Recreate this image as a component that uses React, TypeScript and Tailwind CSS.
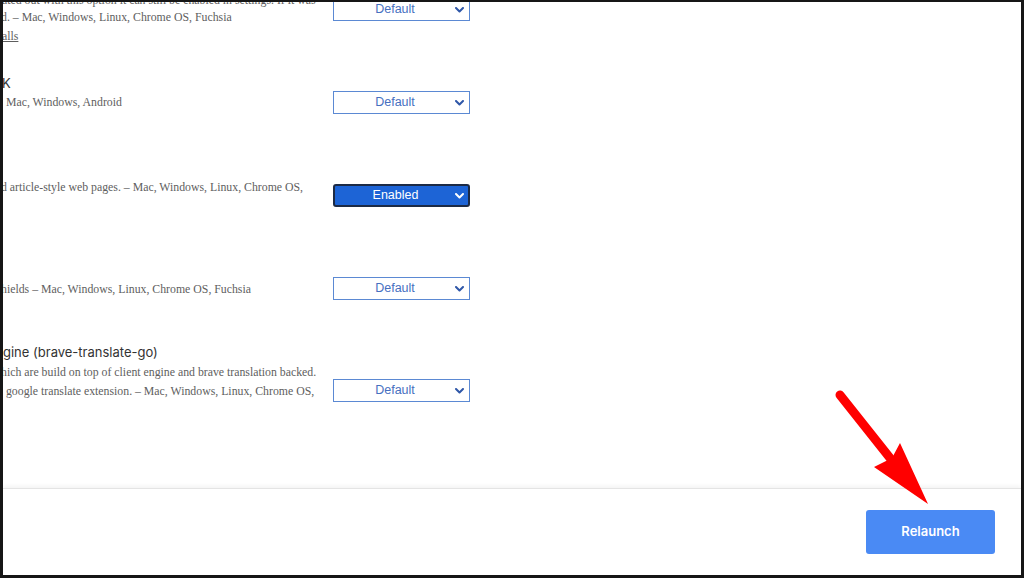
import React from "react";

const serif = { fontFamily: '"Liberation Serif", "Times New Roman", serif' };
const sans = { fontFamily: '"Liberation Sans", Arial, sans-serif' };
const head = { fontFamily: 'Inter, "Noto Sans", sans-serif' };

function Chevron({ color }: { color: string }) {
  return (
    <svg width="9" height="6" viewBox="0 0 9 6" className="shrink-0">
      <path d="M1 1 L4.5 4.5 L8 1" fill="none" stroke={color} strokeWidth="2" strokeLinecap="round" strokeLinejoin="round" />
    </svg>
  );
}

function Select({ value, enabled = false, className = "" }: { value: string; enabled?: boolean; className?: string }) {
  if (enabled) {
    return (
      <div
        className={`flex h-[23px] w-[137px] items-center rounded-[3px] border-2 border-[#1c2a45] bg-[#1d64d6] pr-[4px] text-[12.5px] text-white ${className}`}
        style={sans}
      >
        <span className="flex-1 text-center pl-[1px]">{value}</span>
        <Chevron color="#ffffff" />
      </div>
    );
  }
  return (
    <div
      className={`flex h-[23px] w-[137px] items-center border border-[#5b89d3] bg-white pr-[5px] text-[12.5px] text-[#4670bf] ${className}`}
      style={sans}
    >
      <span className="flex-1 text-center pl-[1px]">{value}</span>
      <Chevron color="#2f57a8" />
    </div>
  );
}

export default function App() {
  return (
    <div className="relative flex h-[578px] w-[1024px] flex-col overflow-hidden border-b-[3px] border-l-[3px] border-r-[3px] border-t-[2px] border-[#161616] bg-white">
      <div className="flex flex-1 flex-col overflow-hidden">
        {/* Row A */}
        <div className="-mt-[10px] flex items-start">
          <div className="w-[330px] text-[11.8px] text-[#5e5e5e] whitespace-nowrap" style={serif}>
            <div className="-ml-[1px] leading-[16px]">ated out with this option it can still be enabled in settings. If it was</div>
            <div className="-ml-[2px] leading-[19px]">d. – Mac, Windows, Linux, Chrome OS, Fuchsia</div>
            <div className="-ml-[1px] leading-[19px]"><span className="underline">alls</span></div>
          </div>
          <Select value="Default" className="mt-[6px]" />
        </div>

        {/* Row B */}
        <div className="mt-[28px] flex items-start">
          <div className="w-[330px] whitespace-nowrap">
            <div className="text-[13px] leading-[18px] text-[#333333] -ml-[1px]" style={head}>K</div>
            <div className="mt-[1px] text-[11.8px] leading-[19px] text-[#5e5e5e]" style={serif}>&nbsp;Mac, Windows, Android</div>
          </div>
          <Select value="Default" className="mt-[17px]" />
        </div>

        {/* Row C */}
        <div className="mt-[63px] flex items-start">
          <div className="mt-[1px] w-[330px] whitespace-nowrap text-[11.8px] leading-[19px] text-[#5e5e5e]" style={serif}>
            <div className="-ml-[2px]">d article-style web pages. – Mac, Windows, Linux, Chrome OS,</div>
          </div>
          <Select value="Enabled" enabled className="mt-[7px]" />
        </div>

        {/* Row D */}
        <div className="mt-[70px] flex items-start">
          <div className="mt-[3px] w-[330px] whitespace-nowrap text-[11.8px] leading-[19px] text-[#5e5e5e]" style={serif}>
            <div className="-ml-[2px]">hields – Mac, Windows, Linux, Chrome OS, Fuchsia</div>
          </div>
          <Select value="Default" />
        </div>

        {/* Row E */}
        <div className="mt-[42px] flex items-start">
          <div className="w-[330px] whitespace-nowrap">
            <div className="text-[13px] leading-[20px] text-[#333333]" style={head}>gine (brave-translate-go)</div>
            <div className="mt-[1px] text-[11.8px] leading-[19px] text-[#5e5e5e]" style={serif}>
              <div className="-ml-[2px]">hich are build on top of client engine and brave translation backed.</div>
              <div>&nbsp;google translate extension. – Mac, Windows, Linux, Chrome OS,</div>
            </div>
          </div>
          <Select value="Default" className="mt-[37px]" />
        </div>
      </div>

      {/* Bottom bar */}
      <div className="flex h-[87px] shrink-0 items-start justify-end border-t border-[#e4e4e4] bg-white pr-[26px] pt-[21px] shadow-[0_-2px_4px_rgba(0,0,0,0.05)]">
        <button
          className="h-[44px] w-[129px] rounded-[3px] bg-[#4a8af4] text-[13px] font-semibold text-white"
          style={head}
        >
          Relaunch
        </button>
      </div>

      {/* Red arrow annotation */}
      <svg className="pointer-events-none absolute left-0 top-0" width="1024" height="578" viewBox="0 0 1024 578">
        <line x1="837" y1="393" x2="887" y2="456" stroke="#ff0000" strokeWidth="9" strokeLinecap="round" />
        <polygon points="925,502 897,441 889,456 871,465" fill="#ff0000" />
      </svg>
    </div>
  );
}
